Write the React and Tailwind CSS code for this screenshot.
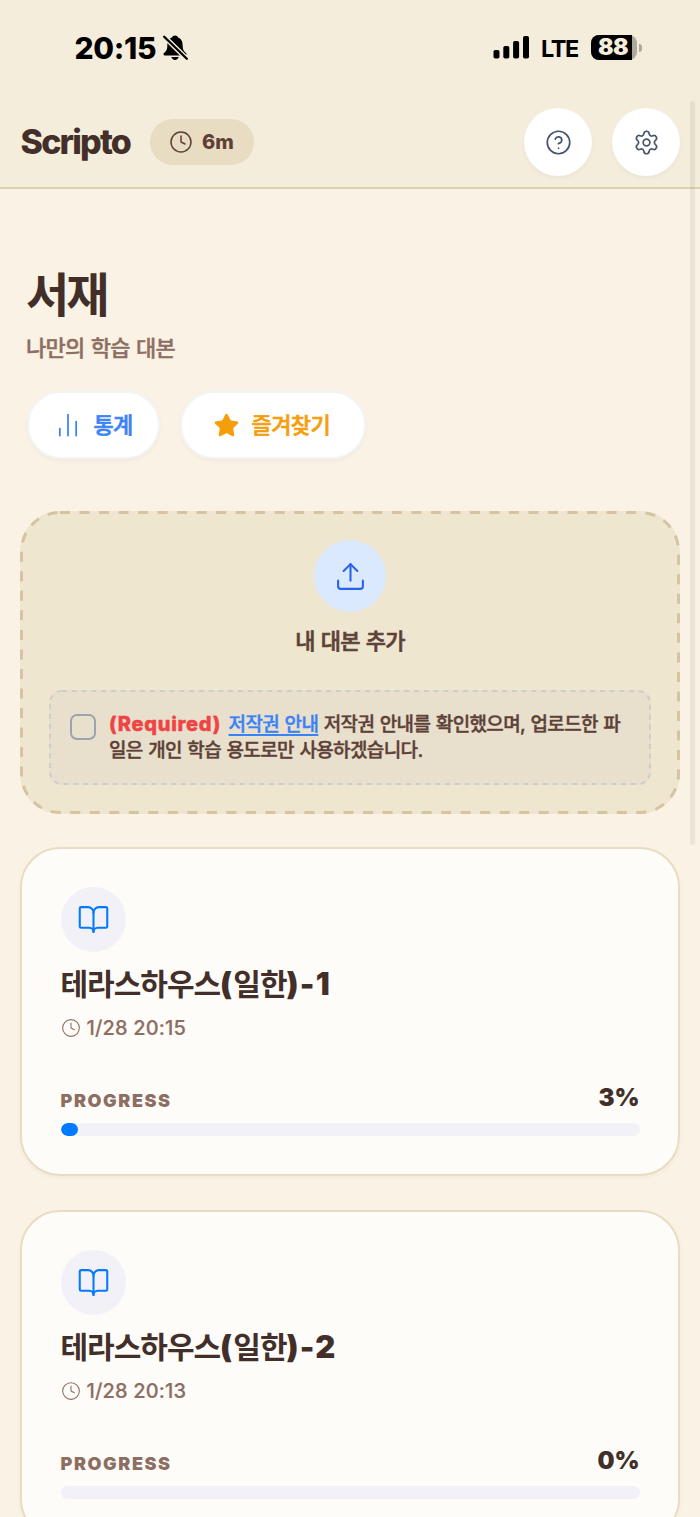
import React from 'react';
import {
  BookOpen,
  ChartNoAxesColumn,
  CircleQuestionMark,
  Clock,
  Settings,
  Star,
  Upload,
} from 'lucide-react';

const scripts = [
  { id: 1, title: '테라스하우스(일한)-1', date: '1/28 20:15', progress: 3 },
  { id: 2, title: '테라스하우스(일한)-2', date: '1/28 20:13', progress: 0 },
];

const StatusBar = () => (
  <div className="h-[97px] flex items-center justify-between pl-[74.5px] pr-[58px] text-black">
    <div className="flex items-center gap-[6px]">
      <span className="-mt-[2px] w-[82px] text-[30px] leading-none font-extrabold tracking-[-0.3px]">20:15</span>
      <svg width="25" height="26" viewBox="0 0 25 26" className="-mt-[1px]">
        <path
          d="M12 0.500c-1.600 0-2.700.9-3 2C5.300 3.700 4.300 7 4.300 11c0 4-1.500 5.500-3.300 7-1 .9-.6 2.400.9 2.400h20.200c1.500 0 1.900-1.500.9-2.400-1.800-1.500-3.300-3-3.300-7 0-4-1-7.300-4.700-8.500-.3-1.100-1.400-2-3-2z"
          fill="currentColor"
        />
        <path d="M8.300 22h7.400c-.5 1.800-1.900 2.900-3.700 2.900s-3.200-1.100-3.700-2.900z" fill="currentColor" />
        <path d="M-1 -0.500L26 26" stroke="#f5eddb" strokeWidth="5" />
        <path d="M1.200 1.700L23.800 23.800" stroke="currentColor" strokeWidth="2.300" strokeLinecap="round" />
      </svg>
    </div>
    <div className="flex items-center">
      <svg width="37" height="23" viewBox="0 0 37 23" fill="currentColor" className="-mt-[2px]">
        <rect x="0.500" y="14" width="6" height="8.500" rx="1.800" />
        <rect x="10.300" y="10" width="6" height="12.500" rx="1.800" />
        <rect x="20.100" y="5" width="6" height="17.500" rx="1.800" />
        <rect x="30" y="0" width="6" height="22.500" rx="1.800" />
      </svg>
      <span className="ml-[11px] w-[37px] text-[23.5px] leading-none font-bold tracking-[-1.4px]">LTE</span>
      <div className="ml-[13px] flex items-center -mt-[2px]">
        <div className="w-[46px] h-[25px] rounded-[8px] bg-[#aea99c] flex">
          <div className="w-[41px] h-full rounded-l-[8px] bg-black text-[#f5eddb] text-[23px] leading-[25px] font-black pl-[7px] tracking-[-0.6px]">
            88
          </div>
        </div>
        <div className="ml-[2px] w-[3px] h-[8px] rounded-r-full bg-[#aea99c]" />
      </div>
    </div>
  </div>
);

const Header = () => (
  <header className="bg-[#f5eddb] border-b-2 border-[#dcd1ae]">
    <StatusBar />
    <div className="h-[90px] px-5 flex items-center justify-between">
      <div className="flex items-center">
        <h1 className="w-[130px] pl-[0.5px] text-[34px] leading-none font-extrabold tracking-[-1.8px] text-[#432f2a]">Scripto</h1>
        <div className="h-[46px] w-[104px] pl-[19px] rounded-full bg-[#e8dcc2] text-[#5d4037] flex items-center gap-[9px]">
          <Clock size={24} strokeWidth={1.5} />
          <span className="-mt-[1px] text-[20px] font-extrabold">6m</span>
        </div>
      </div>
      <div className="flex gap-5 text-[#475569]">
        <button className="size-[68px] rounded-full bg-white shadow-[0_2px_4px_rgba(0,0,0,0.04)] flex items-center justify-center">
          <CircleQuestionMark size={27} strokeWidth={1.5} />
        </button>
        <button className="size-[68px] rounded-full bg-white shadow-[0_2px_4px_rgba(0,0,0,0.04)] flex items-center justify-center">
          <Settings size={27} strokeWidth={1.5} />
        </button>
      </div>
    </div>
  </header>
);

const UploadBox = () => (
  <section className="relative mt-[52px] h-[303px] rounded-[40px] bg-[#eee6cf] flex flex-col items-center pt-[29px] px-[29px]">
    <svg className="absolute inset-0 w-full h-full" fill="none">
      <rect x="1.500" y="1.500" width="657" height="300" rx="38.500" stroke="#d4c4a2" strokeWidth="3" strokeDasharray="10 9.520" />
    </svg>
    <div className="size-[72px] rounded-full bg-[#dbe9fe] text-[#2563eb] flex items-center justify-center">
      <Upload size={33} strokeWidth={1.5} />
    </div>
    <p className="mt-[13px] text-[22px] leading-8 font-medium tracking-[-0.8px] text-[#5d4037] [-webkit-text-stroke:0.6px] [word-spacing:1px]">
      내 대본 추가
    </p>

    <div className="relative mt-[33px] w-[602px] h-[95px] rounded-[13px] bg-[#e8e0cc] flex pl-[21px] pt-[21px]">
      <svg className="absolute inset-0 w-full h-full" fill="none">
        <rect x="1" y="1" width="600" height="93" rx="12" stroke="#cccdcd" strokeWidth="2" strokeDasharray="5 4.780" />
      </svg>
      <span className="mt-[3px] size-[26px] shrink-0 rounded-[7px] border-2 border-[#9ca3af]" />
      <p className="ml-[13px] text-[19px] leading-[26px] font-medium tracking-[-0.62px] text-[#5d4037] whitespace-nowrap [-webkit-text-stroke:0.4px] [word-spacing:1px]">
        <span className="text-[20px] font-extrabold tracking-[0.7px] text-[#ef4444]">(Required)</span>{' '}
        <span className="ml-[2px] text-[#3b82f6] underline underline-offset-[3px] decoration-2">저작권 안내</span>{' '}
        저작권 안내를 확인했으며, 업로드한 파
        <br />
        일은 개인 학습 용도로만 사용하겠습니다.
      </p>
    </div>
  </section>
);

// Latin characters in a title are set heavier and looser than the Hangul around them
const CardTitle = ({ text }) => (
  <h3 className="mt-[11px] text-[30px] leading-[42px] font-bold tracking-[-1px] text-[#432f2a] whitespace-nowrap">
    {text.split(/([()\-\d]+)/).map((part, i) =>
      i % 2 ? (
        <span key={i} className="text-[31px] font-black tracking-[1.2px]">{part}</span>
      ) : (
        part
      )
    )}
  </h3>
);

const ScriptCard = ({ script }) => (
  <article className="h-[329px] rounded-[40px] border-2 border-[#e8dcc2] bg-[#fdfcf8] shadow-[0_2px_4px_rgba(0,0,0,0.04)] px-[38.5px] pt-[38px]">
    <div className="size-[65px] rounded-full bg-[#f2f1f7] text-[#007aff] flex items-center justify-center">
      <BookOpen size={33} strokeWidth={1.5} />
    </div>
    <CardTitle text={script.title} />
    <div className="mt-[8px] flex items-center gap-[6px] text-[#8d6e63]">
      <Clock size={20} strokeWidth={1.3} />
      <span className="text-[20px] leading-[30px] font-medium tracking-[0.15px] [-webkit-text-stroke:0.2px]">{script.date}</span>
    </div>
    <div className="mt-[34px] flex items-end justify-between">
      <span className="text-[18px] leading-[36px] font-black tracking-[1.6px] text-[#8d6e63]">PROGRESS</span>
      <span className="text-[24px] leading-[42px] font-black text-[#432f2a]">{script.progress}%</span>
    </div>
    <div className="mt-[4px] h-[13px] rounded-full bg-[#f2f1f7] overflow-hidden">
      <div className="h-full rounded-full bg-[#007aff]" style={{ width: `${script.progress}%` }} />
    </div>
  </article>
);

export default function App() {
  return (
    <div className="relative w-[700px] h-[1517px] overflow-hidden bg-[#faf3e5] font-['Inter','Noto_Sans_CJK_KR',sans-serif]">
      <Header />

      <main className="px-5">
        {/* Library heading */}
        <div className="px-[7px] pt-[76px]">
          <h2 className="-ml-[1px] text-[47px] leading-[60px] font-bold tracking-[-3px] text-[#432f2a]">서재</h2>
          <p className="-ml-[1px] mt-[8px] text-[22px] leading-[30px] font-medium tracking-[-0.7px] text-[#8d6e63] [-webkit-text-stroke:0.4px] [word-spacing:1px]">
            나만의 학습 대본
          </p>
          <div className="-ml-[0.5px] mt-[28px] flex gap-5">
            <button className="h-[68px] w-[133px] rounded-full bg-white border-2 border-[#f3f4f6] shadow-[0_2px_4px_rgba(0,0,0,0.04)] flex items-center pl-[25px] gap-[12px] text-[#3b82f6]">
              <ChartNoAxesColumn size={28} strokeWidth={1.5} />
              <span className="text-[22px] font-medium tracking-[-0.7px] [-webkit-text-stroke:0.6px]">통계</span>
            </button>
            <button className="h-[68px] w-[186px] rounded-full bg-white border-2 border-[#f3f4f6] shadow-[0_2px_4px_rgba(0,0,0,0.04)] flex items-center pl-[31px] gap-[12px] text-[#f59e0b]">
              <Star size={27} strokeWidth={1.1} fill="currentColor" />
              <span className="text-[22px] font-medium tracking-[-0.6px] [-webkit-text-stroke:0.6px]">즐겨찾기</span>
            </button>
          </div>
        </div>

        <UploadBox />

        <div className="mt-[33px] space-y-[34px]">
          {scripts.map((script) => (
            <ScriptCard key={script.id} script={script} />
          ))}
        </div>
      </main>

      {/* Scroll indicator */}
      <div className="absolute right-[5px] top-[101px] w-[5px] h-[744px] rounded-full bg-black/6" />
    </div>
  );
}
